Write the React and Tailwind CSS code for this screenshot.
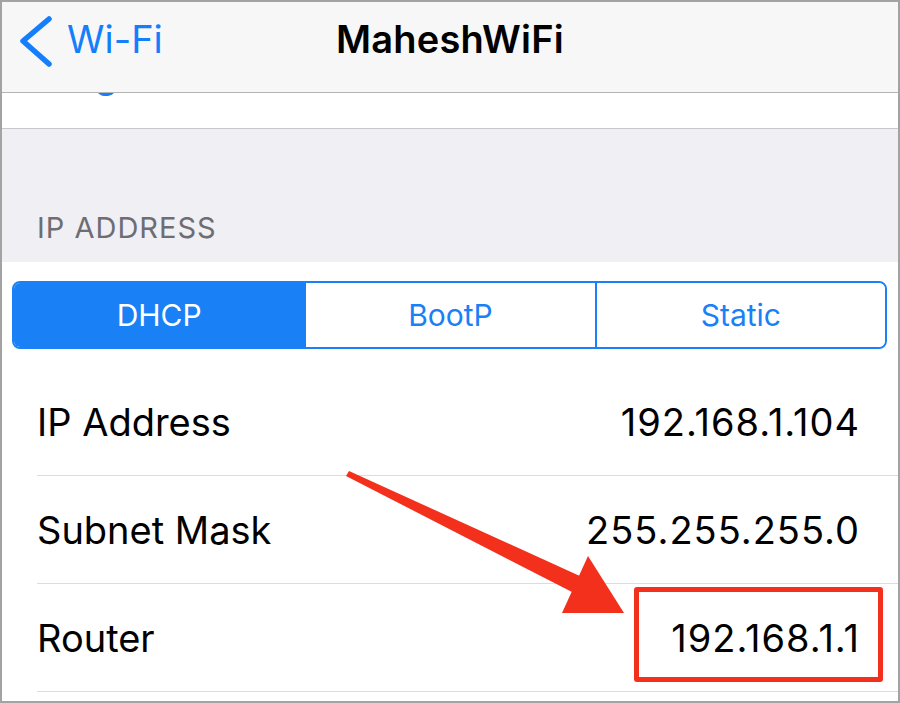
import React from 'react';

const rows = [
  { label: 'IP Address', value: '192.168.1.104' },
  { label: 'Subnet Mask', value: '255.255.255.0' },
  { label: 'Router', value: '192.168.1.1' },
];

const segments = ['DHCP', 'BootP', 'Static'];

export default function App() {
  return (
    <div className="relative w-[900px] h-[703px] overflow-hidden border-2 border-[#a3a3a3] bg-white font-['Inter','Liberation_Sans',sans-serif] text-black">
      {/* Nav bar */}
      <div className="relative z-10 grid grid-cols-[1fr_auto_1fr] items-center h-[91px] pb-[16px] bg-[#f7f7f7] border-b border-[#b4b4b4]">
        <div className="flex items-center">
          <svg width="40" height="52" viewBox="0 0 40 52" className="ml-[16px] mt-[6px]">
            <path d="M31 3 L5 25 L31 48" fill="none" stroke="#157efb" strokeWidth="5.5" strokeLinecap="round" strokeLinejoin="round" />
          </svg>
          <span className="ml-[9px] text-[38px] leading-none text-[#157efb]">Wi-Fi</span>
        </div>
        <span className="text-[38px] leading-none font-semibold tracking-[0.2px]">MaheshWiFi</span>
        <div />
      </div>

      {/* Row scrolled under the nav bar */}
      <div className="h-[36px] overflow-hidden bg-white border-b border-[#c8c7cc]">
        <p className="h-0 -mt-[19px] pl-[35px] text-[38px] leading-[0] text-[#157efb]">Forget This Network</p>
      </div>

      {/* Section header */}
      <div className="h-[133px] bg-[#efeff4] pt-[84px] pl-[35px]">
        <p className="text-[29px] leading-none tracking-[1px] text-[#6d6d72]">IP ADDRESS</p>
      </div>

      {/* Segmented control */}
      <div className="pt-[19px] pl-[10px] pr-[11px]">
        <div className="grid grid-cols-3 h-[68px] rounded-[8px] border-2 border-[#1a80f6] overflow-hidden">
          {segments.map((s, i) => (
            <div
              key={s}
              className={`flex items-center justify-center text-[30px] leading-none ${i === 0 ? 'bg-[#1a80f6] text-white' : 'bg-white text-[#1a80f6]'} ${i > 0 ? 'border-l-2 border-[#1a80f6]' : ''}`}
            >
              {s}
            </div>
          ))}
        </div>
      </div>

      {/* Rows */}
      <div className="mt-[19px] pl-[35px]">
        {rows.map((r) => (
          <div key={r.label} className="flex items-center justify-between h-[108px] pr-[38px] border-b border-[#dcdcdf]">
            <span className="text-[38px] leading-none">{r.label}</span>
            <span className="text-[38px] leading-none tracking-[1px]">{r.value}</span>
          </div>
        ))}
      </div>

      {/* Highlight box */}
      <div className="absolute left-[632px] top-[585px] w-[249px] h-[95px] border-[5px] border-[#f2301b] rounded-[3px]" />

      {/* Arrow */}
      <svg className="absolute left-0 top-0 pointer-events-none" width="896" height="699" viewBox="2 2 896 699">
        <polygon points="346,476 349,471 582,577 574,593" fill="#f2301b" />
        <polygon points="562,613 588,556 624,613" fill="#f2301b" />
      </svg>
    </div>
  );
}
